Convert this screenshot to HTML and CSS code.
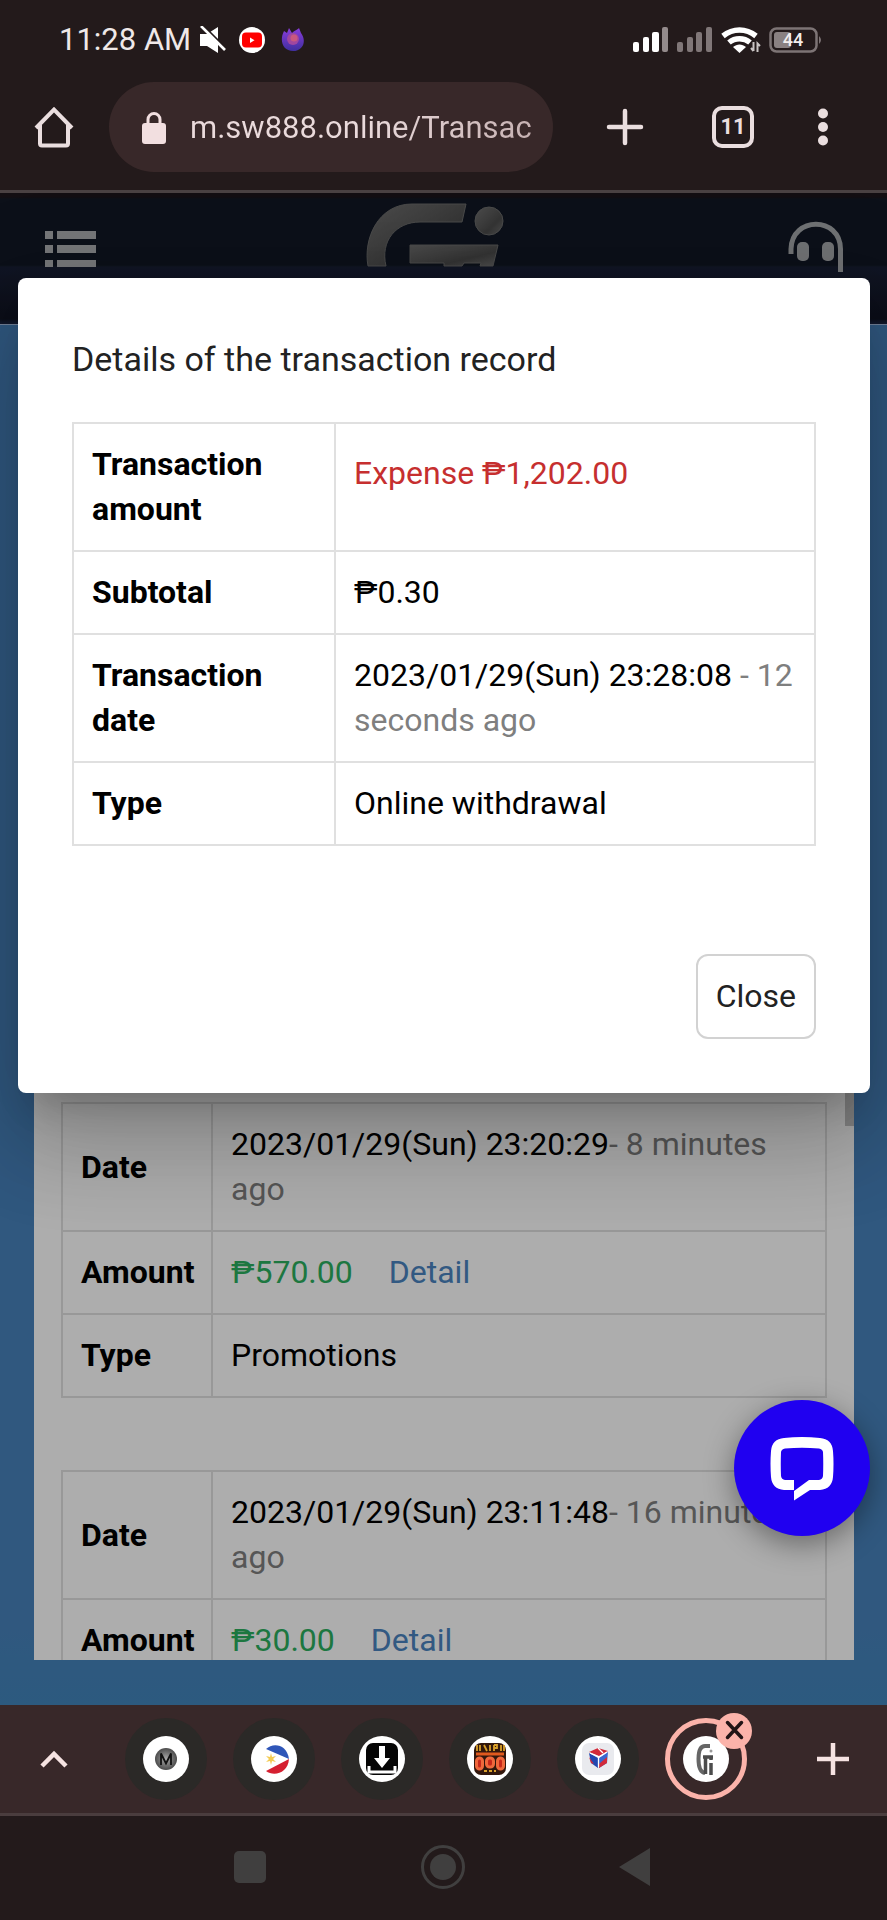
FILE: index.html
```
<!DOCTYPE html>
<html lang="en">
<head>
<meta charset="utf-8">
<meta name="viewport" content="width=device-width, initial-scale=1">
<title>Transaction record</title>
<link rel="stylesheet" href="styles.css">
</head>
<body>
<div class="phone">
  <header class="chrome">
    <div class="status">
      <div class="status-left">
        <span class="clock">11:28 AM</span>
        <svg width="28" height="28" viewBox="0 0 28 28" aria-label="Muted"><path d="M1 8h7l11-7v26l-11-7H1z" fill="#fff"/><path d="M1 -3l28 28" stroke="#231a1b" stroke-width="3"/><path d="M2 0l24 24" stroke="#fff" stroke-width="2.6"/></svg>
        <svg width="26" height="26" viewBox="0 0 26 26" aria-label="YouTube"><circle cx="13" cy="13" r="13" fill="#fff"/><rect x="3" y="5.500" width="20" height="15" rx="4" fill="#f00"/><path d="M11 10.500v5.500l4.500-2.700z" fill="#fff"/></svg>
        <svg width="24" height="26" viewBox="0 0 24 26" aria-label="Firefox"><defs><linearGradient id="ff" x1="0" y1="0" x2="0" y2="1"><stop offset="0" stop-color="#8a3ddb"/><stop offset="1" stop-color="#3f2f9e"/></linearGradient></defs><path d="M3 4l3 2 2-5 3 5c3-3 5-3 7-5l2 5c6 8 2 18-8 18S-2 14 3 4z" fill="url(#ff)"/><circle cx="12" cy="12" r="6" fill="#a0479f"/><circle cx="13" cy="11" r="3.500" fill="#c9587f"/></svg>
      </div>
      <div class="status-right">
        <svg width="36" height="26" viewBox="0 0 36 26" aria-label="Signal, SIM 1"><g fill="#fff"><rect y="15" width="6" height="10" rx="2"/><rect x="10" y="10" width="6" height="15" rx="2"/><rect x="19" y="5" width="7" height="20" rx="2"/></g><rect x="29" width="6" height="25" rx="2" fill="#948b8c"/></svg>
        <svg width="36" height="26" viewBox="0 0 36 26" aria-label="Signal, SIM 2"><g fill="#807778"><rect y="15" width="6" height="10" rx="2"/><rect x="10" y="10" width="6" height="15" rx="2"/><rect x="19" y="5" width="6" height="20" rx="2"/><rect x="29" width="6" height="25" rx="2"/></g></svg>
        <svg width="40" height="26" viewBox="0 0 40 26" aria-label="Wi-Fi"><g fill="none" stroke="#fff" stroke-width="5.500"><path d="M2 9c10-8 23-8 33 0"/><path d="M8 15.500c6-5 15-5 21 0"/></g><path d="M12 20c4-3.500 9-3.500 13 0l-6.500 6z" fill="#fff"/><path d="M32.500 15v9m-2.500-3l2.500 3M36.500 25v-8.500l2.500 2.500" stroke="#c9c4c4" stroke-width="2" fill="none"/></svg>
        <svg width="54" height="26" viewBox="0 0 54 26" aria-label="Battery 44 percent"><rect x="1.500" y="1.500" width="46" height="23" rx="6" fill="none" stroke="#7d7475" stroke-width="2.500"/><rect x="5" y="5" width="17" height="16" rx="3" fill="#8a8182"/><path d="M50 9q4 4 0 8z" fill="#7d7475"/><text x="24" y="19" class="battery-text">44</text></svg>
      </div>
    </div>
    <div class="toolbar">
      <button class="icon-btn home" aria-label="Home"><svg width="44" height="44" viewBox="0 0 44 44"><path d="M4 23L22 4.500 40 23M8 20v18.500q0 2 2 2h24q2 0 2-2V20" fill="none" stroke="#eadedf" stroke-width="4"/></svg></button>
      <div class="omnibox">
        <svg width="26" height="34" viewBox="0 0 26 34" aria-hidden="true"><rect x="1" y="12" width="24" height="21" rx="3" fill="#f2dfe0"/><path d="M7 13V8.500a6 6 0 0 1 12 0V13" fill="none" stroke="#f2dfe0" stroke-width="3"/></svg>
        <input class="url" type="text" value="m.sw888.online/Transac" aria-label="Address" readonly>
      </div>
      <button class="icon-btn new" aria-label="New tab"><svg width="44" height="44" viewBox="0 0 44 44"><path d="M22 6v32M6 22h32" stroke="#eadedf" stroke-width="4.500" stroke-linecap="round"/></svg></button>
      <button class="icon-btn tabs" aria-label="Switch tabs">11</button>
      <button class="icon-btn more" aria-label="More options"><svg width="12" height="44" viewBox="0 0 12 44"><g fill="#eadedf"><circle cx="6" cy="8.500" r="5"/><circle cx="6" cy="22" r="5"/><circle cx="6" cy="35.500" r="5"/></g></svg></button>
    </div>
  </header>

  <main class="viewport">
    <div class="page">
      <div class="site-header">
        <button class="icon-btn" aria-label="Menu"><svg width="51" height="80" viewBox="0 0 51 80"><path d="M0 38h8v8H0zM12 38h39v8H12zM0 52h8v8H0zM12 52h39v8H12zM0 67h8v7H0zM12 67h39v7H12z" fill="#aeb0b3"/></svg></button>
        <svg width="152" height="80" viewBox="0 0 152 80" role="img" aria-label="Gi">
          <defs><linearGradient id="metal" x1="0" y1="0" x2="1" y2="1"><stop offset="0" stop-color="#707070"/><stop offset=".4" stop-color="#5b5b5b"/><stop offset=".65" stop-color="#4c4c4c"/><stop offset="1" stop-color="#6f6f6f"/></linearGradient></defs>
          <g fill="url(#metal)" stroke="#6d6d6d" stroke-width="1">
            <path d="M2 73C-3 46 12 11 46 11H100L96 29H54C30 29 14 48 20 73z"/>
            <path d="M44 52H132L127 73H114L115 70H98L96 73H78V70H44z"/>
            <circle cx="123" cy="28" r="14"/>
          </g>
        </svg>
        <button class="icon-btn" aria-label="Customer service"><svg width="56" height="80" viewBox="0 0 56 80"><path d="M3 61V56C4 23 52 23 52.500 56V79" fill="none" stroke="#a6a8ac" stroke-width="5"/><rect x="9" y="49" width="12" height="19" rx="5" fill="#a6a8ac"/><rect x="34" y="49" width="12" height="19" rx="5" fill="#a6a8ac"/></svg></button>
      </div>
      <div class="records-wrap">
        <section class="records">
          <table class="grid record">
            <tbody>
              <tr><th scope="row">Date</th><td>2023/01/29(Sun) 23:20:29<span class="muted">- 8 minutes ago</span></td></tr>
              <tr><th scope="row">Amount</th><td><span class="income">₱570.00</span><a class="detail" href="#">Detail</a></td></tr>
              <tr><th scope="row">Type</th><td>Promotions</td></tr>
            </tbody>
          </table>
          <table class="grid record">
            <tbody>
              <tr><th scope="row">Date</th><td>2023/01/29(Sun) 23:11:48<span class="muted">- 16 minutes ago</span></td></tr>
              <tr><th scope="row">Amount</th><td><span class="income">₱30.00</span><a class="detail" href="#">Detail</a></td></tr>
            </tbody>
          </table>
          <div class="scroll-thumb"></div>
        </section>
      </div>
    </div>
    <div class="backdrop">
      <div class="modal" role="dialog" aria-modal="true" aria-labelledby="modal-title">
        <h1 class="modal-title" id="modal-title">Details of the transaction record</h1>
        <table class="grid details">
          <tbody>
            <tr><th scope="row">Transaction amount</th><td class="amount">Expense ₱1,202.00</td></tr>
            <tr><th scope="row">Subtotal</th><td>₱0.30</td></tr>
            <tr><th scope="row">Transaction date</th><td>2023/01/29(Sun) 23:28:08 <span class="muted">- 12 seconds ago</span></td></tr>
            <tr><th scope="row">Type</th><td>Online withdrawal</td></tr>
          </tbody>
        </table>
        <div class="modal-actions"><button class="close-btn">Close</button></div>
      </div>
    </div>
    <button class="chat" aria-label="Open chat"><svg width="64" height="64" viewBox="0 0 64 64"><path fill-rule="evenodd" d="M14 1Q32-1 50 1Q62 2 63 14Q64 27 63 40Q62 52 50 53H40L24 63.500V53H14Q2 52 1 40Q0 27 1 14Q2 2 14 1zM15 11.500Q11.500 12 11 15Q10.500 27 11 39Q11.500 42.500 15 43H24V54L39 43H49Q52.500 42.500 53 39Q53.500 27 53 15Q52.500 12 49 11.500Q32 10 15 11.500z" fill="#fff"/></svg></button>
  </main>

  <nav class="tab-strip" aria-label="Tab group">
    <button class="icon-btn caret" aria-label="Expand"><svg width="28" height="18" viewBox="0 0 28 18"><path d="M2 16L14 4l12 12" fill="none" stroke="#f6e3e2" stroke-width="4.500"/></svg></button>
    <div class="tab-list">
      <button class="tab" aria-label="Tab 1"><svg width="46" height="46" viewBox="0 0 46 46"><defs><radialGradient id="ball"><stop offset="0" stop-color="#aaa"/><stop offset="1" stop-color="#4c4c4c"/></radialGradient></defs><circle cx="23" cy="23" r="23" fill="#fff"/><circle cx="23" cy="23" r="11" fill="url(#ball)"/><path d="M18 29V17.500l5 10 5-10V29" fill="none" stroke="#111" stroke-width="1.800"/></svg></button>
      <button class="tab" aria-label="Tab 2"><svg width="46" height="46" viewBox="0 0 46 46"><circle cx="23" cy="23" r="23" fill="#fff"/><path d="M15 13C22 6 36 8 38 23z" fill="#2f56b8"/><path d="M38 23C37 37 23 41 15 35z" fill="#d51f30"/><path d="M20 17l1 4 4-1-3 3 3 3-4-1-1 4-1-4-4 1 3-3-3-3 4 1z" fill="#f3cb52"/></svg></button>
      <button class="tab" aria-label="Tab 3"><svg width="46" height="46" viewBox="0 0 46 46"><circle cx="23" cy="23" r="23" fill="#fff"/><rect x="7" y="7" width="32" height="32" rx="7" fill="#050505"/><path d="M20 10h6v12h5l-8 10-8-10h5z" fill="#fff"/><path d="M10 30v6h26v-6" fill="none" stroke="#fff" stroke-width="3"/></svg></button>
      <button class="tab" aria-label="Tab 4"><svg width="46" height="46" viewBox="0 0 46 46"><circle cx="23" cy="23" r="23" fill="#fff"/><rect x="7" y="7" width="32" height="32" rx="7" fill="#32170c"/><path d="M10 9v6m3-6v6m4-6l3 6m3-6v6m4-6v6m0-6h3v3h-3m7-3v6m3-6v6" stroke="#d9a02a" stroke-width="1.800" fill="none"/><path d="M9 18h28" stroke="#e05a1e" stroke-width="3"/><g fill="#c8281a" stroke="#f0683c" stroke-width="3"><rect x="9.500" y="22" width="6" height="11" rx="3"/><rect x="19.500" y="22" width="7" height="9" rx="3"/><rect x="30.500" y="22" width="6" height="11" rx="3"/></g><path d="M17 35h12" stroke="#d9a02a" stroke-width="2" stroke-dasharray="3 2"/></svg></button>
      <button class="tab" aria-label="Tab 5"><svg width="46" height="46" viewBox="0 0 46 46"><circle cx="23" cy="23" r="23" fill="#fff"/><rect x="7" y="7" width="32" height="32" rx="7" fill="#e9eaee"/><path d="M14 16l9-4 10 3-9 5z" fill="#d22a3a"/><path d="M14 17l9 5v10l-7-5z" fill="#2247b0"/><path d="M33 16l-9 6v10l8-5z" fill="#3a67d0"/><path d="M24 28l8-7v6l-8 5zM14 21l5 7-3-1z" fill="#d22a3a"/><path d="M23 12l5 5M15 17l9 4 8-5M23.500 21v10" stroke="#fff" stroke-width="1.300" fill="none"/></svg></button>
      <button class="tab tab-active" aria-label="Current tab"><svg width="46" height="46" viewBox="0 0 46 46"><circle cx="23" cy="23" r="23" fill="#fff"/><path d="M27 10H22Q15.500 10 15.500 23T22 37" fill="none" stroke="#666" stroke-width="4"/><path d="M20 21h10M22.500 21v17M28 21v3m0 3v12" fill="none" stroke="#4c4c4c" stroke-width="3.500"/><circle cx="28" cy="15" r="1.500" fill="#999"/></svg>
        <span class="tab-close"><svg width="36" height="36" viewBox="0 0 36 36"><path d="M11.500 9.500l14 15M25.500 9.500l-14 15" stroke="#221415" stroke-width="3.500" stroke-linecap="round"/></svg></span></button>
    </div>
    <button class="icon-btn add" aria-label="Add tab"><svg width="32" height="32" viewBox="0 0 32 32"><path d="M16 0v32M0 16h32" stroke="#f6e3e2" stroke-width="4.500"/></svg></button>
  </nav>
  <nav class="system-nav" aria-label="System navigation">
    <button class="icon-btn" aria-label="Recent apps"><svg width="46" height="46" viewBox="0 0 46 46"><rect x="7" y="7" width="32" height="32" rx="5" fill="#403f3f"/></svg></button>
    <button class="icon-btn" aria-label="System home"><svg width="46" height="46" viewBox="0 0 46 46"><circle cx="23" cy="23" r="20.500" fill="none" stroke="#403f3f" stroke-width="3"/><circle cx="23" cy="23" r="13" fill="#403f3f"/></svg></button>
    <button class="icon-btn" aria-label="Back"><svg width="46" height="46" viewBox="0 0 46 46"><path d="M6 23L37 4v38z" fill="#403f3f"/></svg></button>
  </nav>
</div>
</body>
</html>
```
FILE: styles.css
```
* { box-sizing: border-box; }
body {
  margin: 0;
  font-family: Roboto, "Noto Sans", sans-serif;
  color: #000;
  background: #231a1b;
}
svg { display: block; }
button { font-family: inherit; }
.icon-btn {
  padding: 0;
  border: 0;
  background: none;
  flex: none;
}
.phone {
  display: flex;
  flex-direction: column;
  height: 100vh;
}

/* Browser chrome */
.chrome {
  flex: none;
  background: #231a1b;
  border-bottom: 3px solid #4a4142;
}
.status {
  display: flex;
  justify-content: space-between;
  align-items: center;
  height: 82px;
  padding: 0 64px 2px 59px;
}
.status-left { display: flex; align-items: center; gap: 12px; }
.status-left svg:last-child { margin-left: 4px; }
.clock {
  font-size: 31px;
  line-height: 40px;
  color: #efe8e8;
  margin-right: -4px;
}
.status-right { display: flex; align-items: center; gap: 8px; }
.battery-text {
  font-family: Roboto, sans-serif;
  font-weight: 500;
  font-size: 18px;
  fill: #f2eded;
  text-anchor: middle;
}
.toolbar {
  display: flex;
  align-items: center;
  padding: 0 58px 18px 32px;
}
.omnibox {
  display: flex;
  align-items: center;
  flex: 1;
  min-width: 0;
  gap: 23px;
  height: 90px;
  margin: 0 50px 0 33px;
  padding: 2px 12px 0 32px;
  border-radius: 45px;
  background: #382829;
}
.omnibox svg { flex: none; }
.url {
  flex: 1;
  min-width: 0;
  padding: 0;
  border: 0;
  outline: 0;
  font: 400 31px/40px Roboto, sans-serif;
  color: transparent;
  background: linear-gradient(90deg, #eadadb 50%, #c4afb0);
  -webkit-background-clip: text;
  background-clip: text;
}
.tabs {
  width: 42px;
  height: 42px;
  margin: 0 63px 0 65px;
  border: 4px solid #eadedf;
  border-radius: 10px;
  font-size: 22px;
  font-weight: 700;
  line-height: 32px;
  color: #eadedf;
}

/* Site */
.viewport {
  position: relative;
  flex: 1;
  min-height: 0;
}
.page {
  display: flex;
  flex-direction: column;
  height: 100%;
  background: linear-gradient(#4782bd, #4782bb 95%, #4285bb);
}
.site-header {
  display: flex;
  justify-content: space-between;
  align-items: flex-start;
  flex: none;
  height: 132px;
  padding: 0 43px 0 45px;
  border-bottom: 1px solid #a9bfe0;
  background: linear-gradient(#1c151b 0, #1c151b 4px, #121925 6px, #121925 72px, #1a2036 74px, #121524 126px, #1a2340 130px);
}
.records-wrap {
  flex: 1;
  min-height: 0;
  padding: 0 33px 45px 34px;
}
.records {
  position: relative;
  height: 100%;
  overflow: hidden;
  padding: 777px 27px 0;
  background: #fff;
}
.scroll-thumb {
  position: absolute;
  top: 0;
  right: 0;
  width: 9px;
  height: 801px;
  background: #c4c4c4;
}

.grid {
  width: 100%;
  border-collapse: collapse;
  font-size: 32px;
  line-height: 45px;
}
.grid th, .grid td {
  padding: 18px;
  border: 2px solid #e0e0e0;
  text-align: left;
  vertical-align: middle;
}
.grid th { font-weight: 700; }
.record { margin-bottom: 72px; }
.record th {
  width: 150px;
  padding-right: 16px;
}
.details th { width: 262px; }
.muted { color: #7f7f7f; }
.income { color: #2bb05f; }
.detail {
  margin-left: 36px;
  color: #4a84c0;
  text-decoration: none;
}
.grid .amount {
  color: #c62f2f;
  line-height: 62px;
  vertical-align: top;
}

/* Dialog */
.backdrop {
  position: absolute;
  inset: 0;
  padding: 85px 17px 0 18px;
  background: rgba(0, 0, 0, .32);
  overflow: hidden;
}
.modal {
  padding: 57px 54px 54px;
  border-radius: 8px;
  background: #fff;
  box-shadow: 0 25px 34px -16px rgba(0, 0, 0, .2), 0 54px 86px 7px rgba(0, 0, 0, .14), 0 20px 104px 18px rgba(0, 0, 0, .12);
}
.modal-title {
  margin: 0 0 39px;
  font-size: 34px;
  font-weight: 400;
  line-height: 48px;
  color: #222;
}
.modal-actions {
  display: flex;
  justify-content: flex-end;
  margin-top: 108px;
}
.close-btn {
  padding: 18px;
  border: 2px solid #d2d2d2;
  border-radius: 12px;
  background: #fff;
  font-size: 32px;
  line-height: 45px;
  color: #222;
}
.chat {
  position: absolute;
  right: 17px;
  bottom: 169px;
  display: grid;
  place-items: center;
  width: 136px;
  height: 136px;
  padding: 2px 0 0;
  border: 0;
  border-radius: 50%;
  background: #2000f0;
  box-shadow: 0 8px 30px rgba(0, 0, 0, .4);
}

/* Bottom bars */
.tab-strip {
  display: flex;
  align-items: center;
  flex: none;
  height: 111px;
  padding: 0 38px 0 40px;
  background: #382829;
  border-bottom: 3px solid #4a3d3e;
}
.tab-list {
  display: flex;
  gap: 26px;
  flex: 1;
  padding-left: 57px;
}
.tab {
  position: relative;
  display: grid;
  place-items: center;
  width: 82px;
  height: 82px;
  padding: 0;
  border: 0;
  border-radius: 50%;
  background: #2b2927;
}
.tab-active {
  border: 5px solid #fbb3aa;
  background: none;
}
.tab-close {
  position: absolute;
  top: -10px;
  right: -10px;
  width: 36px;
  height: 36px;
  border-radius: 50%;
  background: #fbb3aa;
}
.system-nav {
  display: flex;
  justify-content: center;
  align-items: center;
  gap: 147px;
  flex: none;
  height: 104px;
  padding: 0 2px 2px 0;
  background: #231a1b;
}
```
